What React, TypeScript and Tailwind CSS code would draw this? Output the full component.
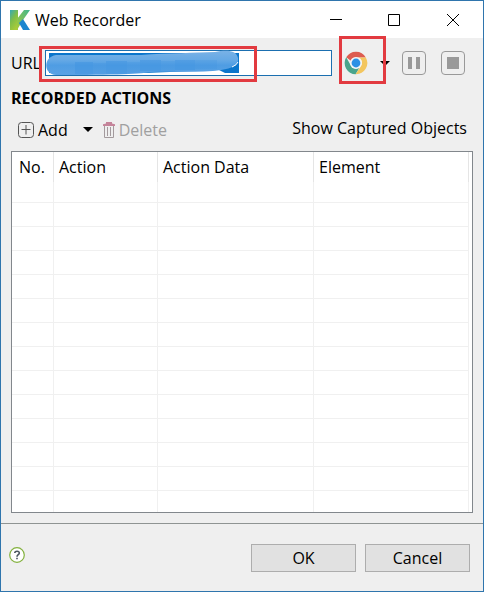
import React from 'react';

const columns = [
  { label: 'No.', width: 'w-[42px]' },
  { label: 'Action', width: 'w-[104px]' },
  { label: 'Action Data', width: 'w-[156px]' },
  { label: 'Element', width: '' },
];

const rows = Array.from({ length: 14 }, (_, i) => i);

const KatalonLogo = () => (
  <svg width="20" height="20" viewBox="0 0 20 20" aria-hidden="true">
    <defs>
      <linearGradient id="stem" x1="0" y1="0" x2="0.6" y2="1">
        <stop offset="0" stopColor="#35a9b8" />
        <stop offset="0.5" stopColor="#7dbd49" />
        <stop offset="1" stopColor="#a9cb38" />
      </linearGradient>
      <linearGradient id="arm" x1="0" y1="1" x2="1" y2="0">
        <stop offset="0" stopColor="#a9cb38" />
        <stop offset="1" stopColor="#3fb68f" />
      </linearGradient>
    </defs>
    <path d="M0 0H8V20H0Z" fill="url(#stem)" />
    <path d="M7 20V9L14 0H20L13 10Z" fill="url(#arm)" />
    <path d="M9 13L13 9L20 20H13Z" fill="#1b86cf" />
  </svg>
);

const ChromeIcon = () => (
  <svg width="24" height="24" viewBox="0 0 24 24" aria-hidden="true">
    <path d="M2.2 6.3A11.3 11.3 0 0 1 21.8 6.4H12A5.7 5.7 0 0 0 6.8 9.8Z" fill="#dd5c50" />
    <path d="M2.2 6.3A11.3 11.3 0 0 0 11.6 23.3L16 15.8A5.7 5.7 0 0 1 7.1 14.9Z" fill="#4aa58c" />
    <path d="M21.8 6.4A11.3 11.3 0 0 1 11.6 23.3L16.9 14.9A5.7 5.7 0 0 0 14.8 6.4Z" fill="#f3c65f" />
    <circle cx="12" cy="12" r="6" fill="#f4f4f4" />
    <circle cx="12" cy="12" r="4.4" fill="#2b90e4" />
  </svg>
);

const Caret = () => (
  <svg width="10" height="5" viewBox="0 0 10 5" aria-hidden="true">
    <path d="M0 0H10L5 5Z" fill="#000" />
  </svg>
);

const TrashIcon = () => (
  <svg width="12" height="16" viewBox="0 0 12 16" fill="none" aria-hidden="true">
    <path d="M0 4V2.2L3 1.6V0H9V1.6L12 2.2V4Z" fill="#c5849a" />
    <path d="M1.5 4V15.5H10.5V4M4.5 5V14M7.5 5V14" stroke="#a39a9d" />
  </svg>
);

const Redaction = () => (
  <svg className="absolute left-0 top-0 pointer-events-none" width="200" height="26" viewBox="0 0 200 26" aria-hidden="true">
    <defs>
      <linearGradient id="brush" x1="0" y1="0" x2="0" y2="1">
        <stop offset="0" stopColor="#7ab2e6" />
        <stop offset="0.4" stopColor="#64a8e5" />
        <stop offset="0.6" stopColor="#4f9de3" />
        <stop offset="1" stopColor="#5aa2e4" />
      </linearGradient>
    </defs>
    <path d="M4 3H194V23H4Z" fill="#0b75cb" />
    <path d="M100 23L174 20L182 24H100Z" fill="#fff" />
    <path
      d="M11 5H96C125 3 150 3 170 2C183-1 192 1 193 8C194 15 188 18 176 20C155 23 127 21 105 22C98 24 72 25 11 25C-2 24-2 7 11 5Z"
      fill="url(#brush)"
    />
    <path d="M30 12H48V24H30ZM61 11H82V24H61ZM95 10H116V21H95ZM130 10H150V20H130Z" fill="#3f93df" fillOpacity="0.45" />
    <path d="M48 13H61V24H48ZM82 12H95V23H82ZM116 11H130V21H116ZM150 10H172V19H150Z" fill="#3f93df" fillOpacity="0.25" />
    <path d="M187 17Q192 15 193 12" stroke="#fff" fill="none" />
  </svg>
);

const TitleBar = () => (
  <header className="flex h-[37px] items-center bg-white pl-[9px]">
    <KatalonLogo />
    <h1 className="ml-[5px] flex-1 text-base">Web Recorder</h1>
    <button type="button" aria-label="Minimize" className="flex h-full w-[58px] items-center justify-center">
      <svg width="12" height="12" viewBox="0 0 12 12" aria-hidden="true">
        <path d="M0 5.5H12" stroke="#000" />
      </svg>
    </button>
    <button type="button" aria-label="Maximize" className="flex h-full w-[58px] items-center justify-center">
      <svg width="12" height="12" viewBox="0 0 12 12" aria-hidden="true">
        <path d="M.5.5H11.5V11.5H.5Z" stroke="#000" fill="none" />
      </svg>
    </button>
    <button type="button" aria-label="Close" className="flex h-full w-[60px] items-center justify-center">
      <svg width="12" height="12" viewBox="0 0 12 12" aria-hidden="true">
        <path d="M0 0L12 12M12 0L0 12" stroke="#000" />
      </svg>
    </button>
  </header>
);

const UrlBar = () => (
  <div className="flex h-[50px] items-center pl-2.5 pr-[18px]">
    <label htmlFor="url" className="w-[34px]">
      URL
    </label>
    <div className="relative flex-1">
      <input id="url" type="text" className="block h-[26px] w-full border border-[#1b6fb0] bg-white px-1 outline-none" />
      <Redaction />
      <div className="pointer-events-none absolute -left-1.5 -top-1 h-9 w-[218px] border-3 border-[#e23a40]" />
    </div>
    <div className="relative ml-3">
      <button type="button" aria-label="Record with Chrome" className="block">
        <ChromeIcon />
      </button>
      <div className="pointer-events-none absolute -left-[5px] -top-[15px] z-10 h-12 w-[47px] border-3 border-[#e23a40]" />
    </div>
    <button type="button" aria-label="Choose browser" className="ml-3">
      <Caret />
    </button>
    <button type="button" aria-label="Pause" disabled className="ml-3 flex h-6 w-6 items-center justify-center gap-1 rounded-sm border border-[#999]">
      <span className="h-3 w-1 bg-[#999]" />
      <span className="h-3 w-1 bg-[#999]" />
    </button>
    <button type="button" aria-label="Stop" disabled className="ml-[15px] flex h-6 w-6 items-center justify-center rounded-sm border border-[#999]">
      <span className="h-3 w-3 bg-[#999]" />
    </button>
  </div>
);

const Toolbar = () => (
  <div className="flex h-[43px] items-center pl-[17px] pr-4">
    <button type="button" className="flex items-center gap-1">
      <svg width="16" height="16" viewBox="0 0 16 16" fill="none" stroke="#555" aria-hidden="true">
        <rect x=".5" y=".5" width="15" height="15" rx="3" />
        <path d="M3.5 7.5H12.5M8 3V12.5" />
      </svg>
      Add
    </button>
    <button type="button" aria-label="More add options" className="ml-[15px]">
      <Caret />
    </button>
    <button type="button" disabled className="ml-2.5 flex items-center gap-1 text-[#a0a0a0]">
      <TrashIcon />
      Delete
    </button>
    <button type="button" className="ml-auto pb-1">
      Show Captured Objects
    </button>
  </div>
);

const ActionsTable = () => (
  <div className="mx-2.5 border border-[#82878c] bg-white pr-[3px]">
    <table className="w-full table-fixed border-separate border-spacing-0">
      <thead>
        <tr className="h-[30px]">
          {columns.map((column) => (
            <th key={column.label} scope="col" className={`border-r border-[#e5e5e5] p-0 pl-[5px] text-left font-normal first:pl-[7px] ${column.width}`}>
              {column.label}
            </th>
          ))}
        </tr>
      </thead>
      <tbody>
        {rows.map((row) => (
          <tr key={row} className="group h-6 first:h-[21px] last:h-[21px]">
            {columns.map((column) => (
              <td key={column.label} className="border-b border-r border-[#f0f0f0] p-0 group-last:border-b-0" />
            ))}
          </tr>
        ))}
      </tbody>
    </table>
  </div>
);

const Footer = () => (
  <footer className="mt-2.5 flex h-[68px] items-center border-t border-[#8f9493] pl-2 pr-[13px]">
    <button type="button" aria-label="Help" className="mb-1.5">
      <svg width="16" height="16" viewBox="0 0 16 16" aria-hidden="true">
        <circle cx="8" cy="8" r="7.3" fill="#fff" stroke="#83b13e" strokeWidth="1.2" />
        <path d="M5.8 6.1C5.8 3.6 10.3 3.5 10.3 6.1C10.3 7.7 8 7.7 8 9.7M8 10.8V12.3" stroke="#4c5661" strokeWidth="1.6" fill="none" />
      </svg>
    </button>
    <button type="button" className="ml-auto h-7 w-[105px] border border-[#adadad] bg-[#e1e1e1]">
      OK
    </button>
    <button type="button" className="ml-[9px] h-7 w-[105px] border border-[#adadad] bg-[#e1e1e1]">
      Cancel
    </button>
  </footer>
);

export default function App() {
  return (
    <main className="border border-[#2f75ad] bg-[#efefef] font-['Open_Sans','Noto_Sans',sans-serif] text-base leading-5 text-black">
      <TitleBar />
      <UrlBar />
      <h2 className="px-2.5 font-bold">RECORDED ACTIONS</h2>
      <Toolbar />
      <ActionsTable />
      <Footer />
    </main>
  );
}
